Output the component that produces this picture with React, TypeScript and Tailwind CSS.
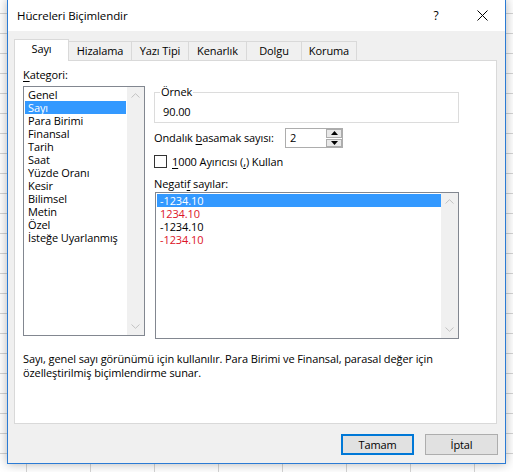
import React from "react";

function ChevronUp() {
  return (
    <svg width="9" height="5" viewBox="0 0 9 5">
      <path d="M0.5 4.5 L4.5 0.7 L8.5 4.5" fill="none" stroke="#c2c2c2" strokeWidth="1" />
    </svg>
  );
}
function ChevronDown() {
  return (
    <svg width="9" height="5" viewBox="0 0 9 5">
      <path d="M0.5 0.5 L4.5 4.3 L8.5 0.5" fill="none" stroke="#c2c2c2" strokeWidth="1" />
    </svg>
  );
}

function Scrollbar() {
  return (
    <div className="w-[17px] h-full bg-[#f0f0f0] flex flex-col items-center justify-between py-[6px]">
      <ChevronUp />
      <ChevronDown />
    </div>
  );
}

const tabs = [
  { label: "Sayı", w: "w-[55px]" },
  { label: "Hizalama", w: "w-[63px]" },
  { label: "Yazı Tipi", w: "w-[57px]" },
  { label: "Kenarlık", w: "w-[58px]" },
  { label: "Dolgu", w: "w-[55px]" },
  { label: "Koruma", w: "w-[55px]" },
];

const categories = [
  "Genel",
  "Sayı",
  "Para Birimi",
  "Finansal",
  "Tarih",
  "Saat",
  "Yüzde Oranı",
  "Kesir",
  "Bilimsel",
  "Metin",
  "Özel",
  "İsteğe Uyarlanmış",
];

const negatives = [
  { t: "-1234.10", red: false },
  { t: "1234.10", red: true },
  { t: "-1234.10", red: false },
  { t: "-1234.10", red: true },
];

export default function App() {
  return (
    <div className="relative w-[513px] h-[472px] overflow-hidden bg-white bg-[linear-gradient(to_right,#d4d4d4_1px,transparent_1px),linear-gradient(to_bottom,#d4d4d4_1px,transparent_1px)] bg-[size:64px_20px] bg-[position:26px_13px] font-['Open_Sans',sans-serif] text-[11px] tracking-[-0.1px] text-black">
      <div className="absolute left-[7px] top-[-1px] w-[499px] h-[465px] border border-[#2b7bd4] bg-[#f0f0f0] shadow-[0_0_10px_rgba(0,0,0,0.3)] flex flex-col">
        {/* Title bar */}
        <div className="h-[31px] bg-white flex items-center shrink-0">
          <span className="pl-[9px] text-[11.5px] leading-[14px]">Hücreleri Biçimlendir</span>
          <div className="flex-1" />
          <div className="w-[46px] h-full flex items-center justify-center text-[12px]">?</div>
          <div className="w-[46px] h-full flex items-center justify-center">
            <svg width="11" height="11" viewBox="0 0 11 11">
              <path d="M0.5 0.5 L10.5 10.5 M10.5 0.5 L0.5 10.5" stroke="#000" strokeWidth="1" fill="none" />
            </svg>
          </div>
        </div>

        {/* Body */}
        <div className="flex-1 px-[6px] pt-[8px]">
          {/* Tabs */}
          <div className="flex items-end h-[21px] relative z-10">
            {tabs.map((t, i) =>
              i === 0 ? (
                <div
                  key={t.label}
                  className={`${t.w} h-[22px] -mb-px bg-white border border-b-0 border-[#d9d9d9] flex items-center justify-center pb-[2px]`}
                >
                  {t.label}
                </div>
              ) : (
                <div
                  key={t.label}
                  className={`${t.w} h-[19px] border-t border-r border-[#d9d9d9] flex items-center justify-center`}
                >
                  {t.label}
                </div>
              )
            )}
          </div>

          {/* Panel */}
          <div className="w-[483px] h-[364px] bg-white border border-[#d9d9d9] pl-[8px] pt-[7px]">
            <div className="flex gap-[9px]">
              {/* Left column */}
              <div className="w-[122px] flex flex-col">
                <div className="h-[13px] leading-[13px]">
                  <span className="underline underline-offset-2">K</span>ategori:
                </div>
                <div className="mt-[5px] h-[250px] border border-[#828790] flex">
                  <div className="flex-1 pt-[1px]">
                    {categories.map((c, i) => (
                      <div
                        key={c}
                        className={`h-[13px] leading-[13px] mx-[1px] pl-[3px] whitespace-nowrap ${
                          i === 1 ? "bg-[#3399ff] text-white" : ""
                        }`}
                      >
                        {c}
                      </div>
                    ))}
                  </div>
                  <Scrollbar />
                </div>
              </div>

              {/* Right column */}
              <div className="w-[305px] flex flex-col">
                <div className="relative mt-[24px] h-[31px] border border-[#dcdcdc]">
                  <span className="absolute left-[5px] top-[-8px] bg-white px-[1px] leading-[14px]">Örnek</span>
                  <div className="pl-[8px] pt-[12px] leading-[14px]">90.00</div>
                </div>

                <div className="mt-[5px] flex items-center h-[20px]">
                  <span className="w-[131px] leading-[14px] whitespace-nowrap">
                    Ondalık <span className="underline underline-offset-2">b</span>asamak sayısı:
                  </span>
                  <div className="w-[58px] h-[20px] border border-[#adadad] flex bg-white">
                    <div className="flex-1 pl-[4px] leading-[18px]">2</div>
                    <div className="w-[16px] flex flex-col gap-[1px]">
                      <div className="flex-1 bg-[#e8e8e8] border border-[#adadad] flex items-center justify-center">
                        <svg width="7" height="4" viewBox="0 0 7 4">
                          <path d="M0 4 L3.5 0 L7 4 Z" fill="#000" />
                        </svg>
                      </div>
                      <div className="flex-1 bg-[#e8e8e8] border border-[#adadad] flex items-center justify-center">
                        <svg width="7" height="4" viewBox="0 0 7 4">
                          <path d="M0 0 L3.5 4 L7 0 Z" fill="#000" />
                        </svg>
                      </div>
                    </div>
                  </div>
                </div>

                <div className="mt-[7px] flex items-center h-[13px]">
                  <div className="w-[13px] h-[13px] border border-[#333] bg-white" />
                  <span className="ml-[5px] leading-[14px] whitespace-nowrap">
                    <span className="underline underline-offset-2">1</span>000 Ayırıcısı (
                    <span className="underline underline-offset-2">,</span>) Kullan
                  </span>
                </div>

                <div className="mt-[9px] h-[13px] leading-[13px]">
                  Negati<span className="underline underline-offset-2">f</span> sayılar:
                </div>

                <div className="mt-[2px] ml-[1px] h-[147px] border border-[#828790] flex">
                  <div className="flex-1 pt-[1px]">
                    {negatives.map((n, i) => (
                      <div
                        key={i}
                        className={`h-[13px] leading-[13px] ml-[1px] pl-[3px] ${
                          i === 0 ? "bg-[#3399ff] text-white" : n.red ? "text-[#dc1428]" : ""
                        }`}
                      >
                        {n.t}
                      </div>
                    ))}
                  </div>
                  <Scrollbar />
                </div>
              </div>
            </div>

            <div className="mt-[13px] leading-[14px] w-[460px]">
              <div className="whitespace-nowrap">
                Sayı, genel sayı görünümü için kullanılır. Para Birimi ve Finansal, parasal değer için
              </div>
              <div className="whitespace-nowrap">özelleştirilmiş biçimlendirme sunar.</div>
            </div>
          </div>

          {/* Buttons */}
          <div className="mt-[10px] flex justify-end gap-[11px] pr-[1px]">
            <button className="w-[73px] h-[21px] bg-[#e1e1e1] border-2 border-[#0078d7] flex items-center justify-center leading-[14px]">
              Tamam
            </button>
            <button className="w-[73px] h-[21px] bg-[#e1e1e1] border border-[#adadad] flex items-center justify-center leading-[14px]">
              İptal
            </button>
          </div>
        </div>
      </div>
    </div>
  );
}
